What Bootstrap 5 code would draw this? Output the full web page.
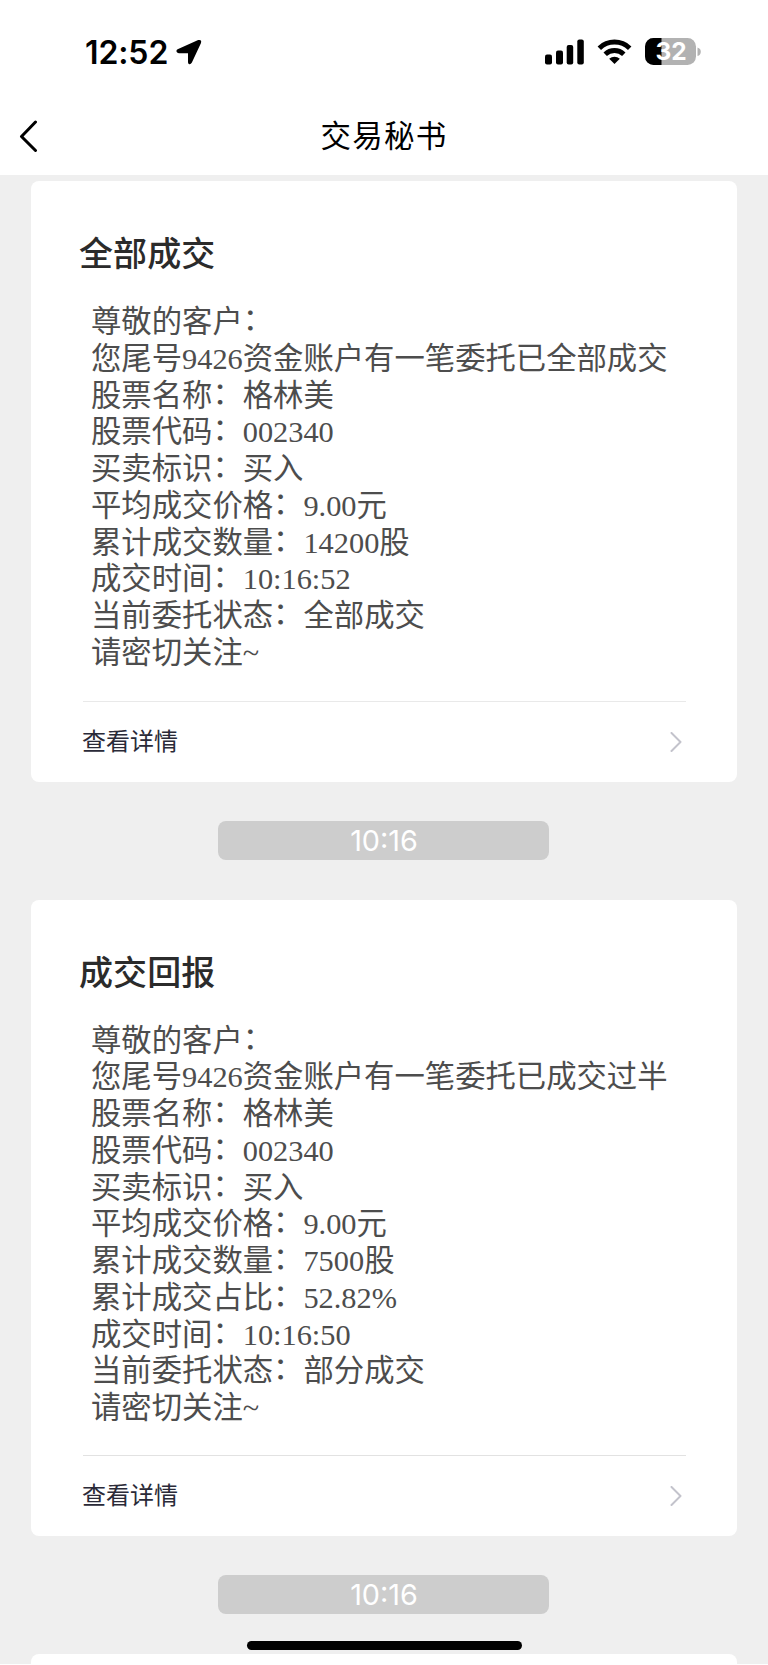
<!DOCTYPE html>
<html lang="zh-CN">
<head>
<meta charset="utf-8">
<meta name="viewport" content="width=device-width, initial-scale=1">
<title>交易秘书</title>
<link href="https://cdn.jsdelivr.net/npm/bootstrap@5.3.0/dist/css/bootstrap.min.css" rel="stylesheet">
<style>
  body { background: #efefef; font-family: Inter, "Noto Sans CJK SC", sans-serif; }
  .screen { height: 1665px; border-bottom: 1px solid #fff; }
  .status { height: 101px; padding: 3px 67px 0 85px; color: #000; }
  .clock { font-size: 32px; font-weight: 600; line-height: 1; letter-spacing: -.1px; padding-top: 2px; }
  .topbar { height: 74px; padding: 0 19px 5px; color: #000; }
  .topbar h1 { font-size: 30.5px; letter-spacing: 1.200px; line-height: 40px; font-weight: 400; }
  .feed { padding: 6px 31px 0; }
  .msg { border: 0; border-radius: 8px; background: #fff; padding: 52px 51px 0 52px; }
  .msg h2 { font-size: 34px; font-weight: 500; line-height: 42px; letter-spacing: .1px; color: #2b2b2b; margin: 0 0 0 -4px; }
  .msg-text { font-family: "Liberation Serif", "Noto Sans CJK SC", serif; font-size: 30.35px; line-height: 36.75px; color: #4d4d4d; padding-left: 8px; margin-top: 29px; white-space: nowrap; }
  .msg-text div { height: 36.75px; }
  .msg-text i { font-style: normal; line-height: 0; vertical-align: 2px; }
  .more { border-top: 1px solid #e9e9e9; margin-top: 29px; height: 81px; font-size: 24px; color: #2a2a38; padding-right: 4px; }
  .more span { margin-left: -1px; }
  .msg-long .more { margin-top: 28px; border-color: #e2e2e2; }
  .stamp { width: 331px; height: 39px; margin: 39px 187px 40px; border-radius: 8px; background: #cdcdcd; color: #fff; font-size: 28.8px; line-height: 39px; padding-left: 1px; }
  .home-bar { left: 246.500px; top: 1641px; width: 275px; height: 9px; background: #000; border-radius: 5px; }
</style>
</head>
<body>
<div class="screen position-relative overflow-hidden">
  <header class="bg-white">
    <div class="status d-flex align-items-center justify-content-between">
      <div class="d-flex align-items-center">
        <span class="clock">12:52</span>
        <svg class="ms-1 ps-1" width="30" height="26" viewBox="0 0 26 26"><path d="M1.600 10.200 22.200 1.100Q26 .2 25 4L15.900 23.400Q14.900 25.400 13.200 25.200Q12 24.800 12 23.200V14.200H2.800Q.6 14 .4 12.300Q.4 10.900 1.600 10.200Z"/></svg>
      </div>
      <svg width="158" height="38" viewBox="0 -5 158 38">
        <rect x="2" y="16.500" width="7" height="10" rx="2"/><rect x="13" y="12.500" width="7" height="14" rx="2"/><rect x="23.700" y="7" width="6.500" height="19.500" rx="2"/><rect x="34.300" y="1.500" width="6.500" height="25" rx="2"/>
        <g fill="none" stroke="#000" stroke-width="5"><path d="M56.300 10.200a22 22 0 0 1 30.400 0"/><path d="M62.200 16.300a13.600 13.600 0 0 1 18.600 0"/></g>
        <path d="M71.500 26 66.200 20.700a8 8 0 0 1 10.600 0Z"/>
        <rect x="102" y="0" width="51" height="27" rx="8.500" fill="#b2b2b2"/>
        <path d="M118.500 0H110.500a8.500 8.500 0 0 0-8.500 8.500v10a8.500 8.500 0 0 0 8.500 8.500h8z"/>
        <path d="M154.500 9.500q3.300 1 3.300 4.300t-3.300 4.300z" fill="#b2b2b2"/>
        <text x="128" y="22.300" text-anchor="middle" font-size="24.500" font-weight="700" fill="#fff">32</text>
      </svg>
    </div>
    <nav class="topbar d-flex align-items-center justify-content-between">
      <svg width="20" height="32" viewBox="0 0 20 32" fill="none" stroke="#000" stroke-width="3" stroke-linecap="round" stroke-linejoin="round"><path d="M16.500 2 2.500 16.500l14 14"/></svg>
      <h1 class="m-0">交易秘书</h1>
      <span class="ps-3 ms-1"></span>
    </nav>
  </header>
  <main class="feed">
    <article class="card msg">
      <h2>全部成交</h2>
      <div class="msg-text">
        <div>尊敬的客户<i>：</i></div>
        <div>您尾号9426资金账户有一笔委托已全部成交</div>
        <div>股票名称<i>：</i>格林美</div>
        <div>股票代码<i>：</i>002340</div>
        <div>买卖标识<i>：</i>买入</div>
        <div>平均成交价格<i>：</i>9.00元</div>
        <div>累计成交数量<i>：</i>14200股</div>
        <div>成交时间<i>：</i>10:16:52</div>
        <div>当前委托状态<i>：</i>全部成交</div>
        <div>请密切关注~</div>
      </div>
      <div class="more d-flex align-items-center justify-content-between">
        <span>查看详情</span>
        <svg width="12" height="20" viewBox="0 0 12 20" fill="none" stroke="#c3c3cc" stroke-width="2" stroke-linecap="round" stroke-linejoin="round"><path d="M1.500 1 10.500 10l-9 9"/></svg>
      </div>
    </article>
    <div class="stamp text-center">10:16</div>
    <article class="card msg msg-long">
      <h2>成交回报</h2>
      <div class="msg-text">
        <div>尊敬的客户<i>：</i></div>
        <div>您尾号9426资金账户有一笔委托已成交过半</div>
        <div>股票名称<i>：</i>格林美</div>
        <div>股票代码<i>：</i>002340</div>
        <div>买卖标识<i>：</i>买入</div>
        <div>平均成交价格<i>：</i>9.00元</div>
        <div>累计成交数量<i>：</i>7500股</div>
        <div>累计成交占比<i>：</i>52.82%</div>
        <div>成交时间<i>：</i>10:16:50</div>
        <div>当前委托状态<i>：</i>部分成交</div>
        <div>请密切关注~</div>
      </div>
      <div class="more d-flex align-items-center justify-content-between">
        <span>查看详情</span>
        <svg width="12" height="20" viewBox="0 0 12 20" fill="none" stroke="#c3c3cc" stroke-width="2" stroke-linecap="round" stroke-linejoin="round"><path d="M1.500 1 10.500 10l-9 9"/></svg>
      </div>
    </article>
    <div class="stamp text-center">10:16</div>
    <article class="card msg"></article>
  </main>
  <div class="home-bar position-absolute"></div>
</div>
<script src="https://cdn.jsdelivr.net/npm/bootstrap@5.3.0/dist/js/bootstrap.bundle.min.js"></script>
</body>
</html>
